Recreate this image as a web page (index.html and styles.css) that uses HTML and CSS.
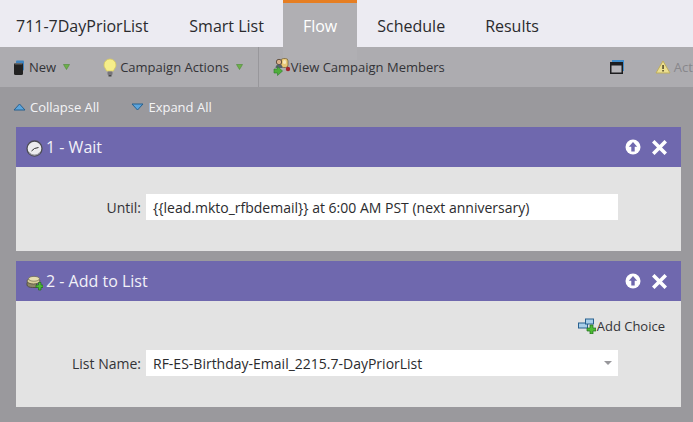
FILE: index.html
```html
<!DOCTYPE html>
<html lang="en">
<head>
    <meta charset="UTF-8">
    <title>711-7DayPriorList</title>
    <link rel="stylesheet" href="styles.css">
</head>
<body>

<!-- Tabs -->
<nav class="tabs">
    <a class="tab tab-first">711-7DayPriorList</a>
    <a class="tab tab-list">Smart List</a>
    <a class="tab tab-active">Flow</a>
    <a class="tab">Schedule</a>
    <a class="tab">Results</a>
</nav>

<!-- Toolbar -->
<div class="toolbar">
    <div class="tool tool-new">
        <svg class="icon" width="12" height="15" viewBox="0 0 12 15">
            <rect x="3" y="0.500" width="8" height="10" rx="1" fill="#3f84c0"/>
            <rect x="1" y="3" width="9" height="12" rx="1.500" fill="#222"/>
            <rect x="2" y="3" width="7" height="1.500" fill="#666"/>
        </svg>
        <span>New</span>
        <svg class="caret" width="7" height="6" viewBox="0 0 7 6"><path d="M0.500 0.500h6L3.500 5.500z" fill="#6db04a" stroke="#4c8a36" stroke-width="0.600"/></svg>
    </div>
    <div class="tool tool-actions">
        <svg class="icon" width="14" height="19" viewBox="0 0 14 19">
            <path d="M7 1a6 6 0 0 0-6 6c0 2.500 1.800 3.700 2.600 6h6.800c.8-2.300 2.600-3.500 2.600-6a6 6 0 0 0-6-6z" fill="#f6ee8a" stroke="#d9c95c" stroke-width="0.800"/>
            <rect x="4.500" y="13.500" width="5" height="3.500" rx="1" fill="#77757a"/>
            <rect x="5.500" y="17" width="3" height="1.500" fill="#444"/>
        </svg>
        <span>Campaign Actions</span>
        <svg class="caret" width="7" height="6" viewBox="0 0 7 6"><path d="M0.500 0.500h6L3.500 5.500z" fill="#6db04a" stroke="#4c8a36" stroke-width="0.600"/></svg>
    </div>
    <div class="tool tool-members">
        <svg class="icon" width="18" height="18" viewBox="0 0 18 18">
            <rect x="8" y="0.500" width="7" height="9" rx="2.500" fill="#e8c877" stroke="#6d5a33" stroke-width="0.700"/>
            <rect x="10" y="2" width="3" height="4" rx="1.500" fill="#f5e6bd"/>
            <circle cx="6" cy="4" r="2.700" fill="#d9b08a" stroke="#4a3a2a" stroke-width="0.800"/>
            <path d="M2.500 10c0-2.500 1.500-3.500 3.500-3.500s3.500 1 3.500 3.500z" fill="#56606e"/>
            <circle cx="15" cy="11" r="2.200" fill="#a3242c"/>
            <path d="M1 11h3.500V8.500l5 4.500-5 4.500V15H1z" fill="#4fae3c" stroke="#2e7c28" stroke-width="0.600"/>
        </svg>
        <span>View Campaign Members</span>
    </div>
    <svg class="window-icon" width="14" height="14" viewBox="0 0 14 14">
        <rect x="2" y="0" width="12" height="11" fill="#3f8ccb"/>
        <rect x="0.750" y="2.750" width="11.500" height="10.500" fill="#b7b6ba" stroke="#1d1d1f" stroke-width="1.500"/>
        <rect x="0" y="2" width="13" height="3.500" fill="#1d1d1f"/>
    </svg>
    <div class="tool tool-warn">
        <svg class="icon" width="16" height="14" viewBox="0 0 16 14">
            <path d="M8 1l7 12H1z" fill="#ecdf90" stroke="#bfae5c" stroke-width="1" stroke-linejoin="round"/>
            <rect x="7.300" y="5" width="1.500" height="4" fill="#4a4325"/>
            <rect x="7.300" y="10" width="1.500" height="1.500" fill="#4a4325"/>
        </svg>
        <span>Act</span>
    </div>
</div>

<div class="content">
    <div class="collapse-row">
        <a class="collapse-link collapse-first">
            <svg width="13" height="8" viewBox="0 0 13 8"><path d="M6.500 1L12 7H1z" fill="#5da5dc" stroke="#27608f" stroke-width="1"/></svg>
            Collapse All
        </a>
        <a class="collapse-link">
            <svg width="13" height="8" viewBox="0 0 13 8"><path d="M1 1h11L6.500 7z" fill="#5da5dc" stroke="#27608f" stroke-width="1"/></svg>
            Expand All
        </a>
    </div>

    <!-- Step 1 -->
    <section class="step">
        <header class="step-head">
            <svg class="step-icon step-icon-clock" width="17" height="17" viewBox="0 0 17 17">
                <circle cx="8.500" cy="8.500" r="7.500" fill="#ececee" stroke="#4c4c55" stroke-width="1.300"/>
                <path d="M3 12.500a7 7 0 0 0 11 0" fill="none" stroke="#9a9aa2" stroke-width="1.200"/>
                <path d="M8.500 8.500L12.500 7.500M8.500 8.500L5.500 11" stroke="#333" stroke-width="1" fill="none"/>
            </svg>
            <h2>1 - Wait</h2>
            <div class="step-btns">
                <svg width="16" height="16" viewBox="0 0 16 16"><circle cx="8" cy="8" r="7.500" fill="#fff"/><path d="M8 3l4.200 4.800H9.700V12.500H6.300V7.800H3.800z" fill="#6f68ae"/></svg>
                <svg width="15" height="15" viewBox="0 0 15 15"><path d="M2.500 2.500l10 10M12.500 2.500l-10 10" stroke="#fff" stroke-width="3.600" stroke-linecap="square"/></svg>
            </div>
        </header>
        <div class="step-body step-body-wait">
            <div class="field">
                <label>Until:</label>
                <div class="field-value">{{lead.mkto_rfbdemail}} at 6:00 AM PST (next anniversary)</div>
            </div>
        </div>
    </section>

    <!-- Step 2 -->
    <section class="step">
        <header class="step-head">
            <svg class="step-icon" width="17" height="17" viewBox="0 0 17 17">
                <path d="M1 8.500v2.500c0 1.500 2.500 2.500 5.500 2.500h4V8.500z" fill="#8d8768" stroke="#4a4735" stroke-width="0.800"/>
                <ellipse cx="7.500" cy="7" rx="6.500" ry="3" fill="#d8cf9c" stroke="#55523f" stroke-width="0.800"/>
                <ellipse cx="8" cy="4.800" rx="5.500" ry="2.400" fill="#e6deb0" stroke="#6f6b50" stroke-width="0.700"/>
                <path d="M10 11h2.500V8.500H15V11h2v2.500h-2V16h-2.500v-2.500H10z" fill="#4dbb35" stroke="#1f6d1d" stroke-width="0.700"/>
            </svg>
            <h2>2 - Add to List</h2>
            <div class="step-btns">
                <svg width="16" height="16" viewBox="0 0 16 16"><circle cx="8" cy="8" r="7.500" fill="#fff"/><path d="M8 3l4.200 4.800H9.700V12.500H6.300V7.800H3.800z" fill="#6f68ae"/></svg>
                <svg width="15" height="15" viewBox="0 0 15 15"><path d="M2.500 2.500l10 10M12.500 2.500l-10 10" stroke="#fff" stroke-width="3.600" stroke-linecap="square"/></svg>
            </div>
        </header>
        <div class="step-body step-body-list">
            <a class="add-choice">
                <svg width="18" height="16" viewBox="0 0 18 16">
                    <rect x="0.500" y="5" width="9" height="5" fill="#a9cfe9" stroke="#27608f"/>
                    <rect x="7.500" y="1" width="8" height="5" fill="#a9cfe9" stroke="#27608f"/>
                    <path d="M9 10h3V7h3v3h3v3h-3v3h-3v-3H9z" fill="#4dbb35" stroke="#1f6d1d" stroke-width="0.700"/>
                </svg>
                <span>Add Choice</span>
            </a>
            <div class="field">
                <label>List Name:</label>
                <div class="field-value field-select">
                    RF-ES-Birthday-Email_2215.7-DayPriorList
                    <span class="select-arrow"></span>
                </div>
            </div>
        </div>
    </section>
</div>

</body>
</html>
```

FILE: styles.css
```css
html, body {
    height: 100%;
}
body {
    margin: 0;
    overflow: hidden;
    background-color: #9a999d;
    font-family: "Open Sans", Arial, sans-serif;
    color: #2b2b2e;
}
.tabs {
    display: flex;
    height: 47px;
    background-color: #ecebf2;
}
.tab {
    padding: 16px 20px 0;
    font-size: 16px;
    line-height: 20px;
    color: #2a2a2d;
}
.tab-first {
    padding-left: 16px;
    padding-right: 21px;
}
.tab-list {
    padding-left: 20px;
    padding-right: 19px;
}
.tab-active {
    height: 44px;
    padding: 13px 20px 0;
    border-top: 3px solid #e67e22;
    background-color: #b0afb3;
    color: #fff;
}
.toolbar {
    display: flex;
    align-items: center;
    height: 40px;
    background-color: #adacb0;
    font-size: 13px;
    color: #333337;
}
.tool {
    display: flex;
    align-items: center;
    white-space: nowrap;
}
.tool .icon {
    flex: none;
}
.tool-new {
    margin-left: 13px;
}
.tool-new span {
    margin-left: 4px;
}
.caret {
    margin-left: 7px;
}
.tool-actions {
    margin-left: 33px;
}
.tool-actions span {
    margin-left: 3px;
}
.tool-members {
    height: 40px;
    margin-left: 15px;
    padding-left: 14px;
    border-left: 1px solid #98979b;
}
.window-icon {
    flex: none;
    margin-left: 165px;
}
.tool-warn {
    margin-left: 31px;
    color: #88878b;
}
.tool-warn span {
    margin-left: 3px;
}
.collapse-row {
    display: flex;
    height: 40px;
    align-items: center;
    font-size: 13px;
    color: #f4f4f6;
}
.collapse-link {
    display: flex;
    align-items: center;
    gap: 4px;
}
.collapse-first {
    margin-left: -3px;
    margin-right: 32px;
}
.content {
    padding: 0 12px 0 16px;
}
.step {
    margin-bottom: 10px;
}
.step-head {
    display: flex;
    align-items: center;
    height: 40px;
    padding: 0 14px 0 10px;
    background-color: #6f68ae;
    color: #fff;
}
.step-head h2 {
    margin: 0 0 0 3px;
    font-size: 16px;
    font-weight: 400;
    color: #f2f1f8;
}
.step-icon {
    flex: none;
    margin-top: 2px;
}
.step-icon-clock {
    margin-top: 3px;
}
.step-btns {
    display: flex;
    align-items: center;
    gap: 11px;
    margin-left: auto;
}
.step-body {
    background-color: #e3e3e3;
    box-sizing: border-box;
}
.step-body-wait {
    height: 84px;
    padding-top: 27px;
}
.step-body-list {
    height: 106px;
    padding-top: 17px;
}
.field {
    display: flex;
    align-items: center;
    justify-content: flex-end;
    width: 602px;
    font-size: 14px;
}
.field label {
    margin-right: 5px;
    color: #333337;
}
.field-value {
    box-sizing: border-box;
    position: relative;
    width: 472px;
    height: 26px;
    padding-left: 7px;
    background-color: #fff;
    line-height: 27px;
    color: #2b2b2e;
}
.select-arrow {
    position: absolute;
    right: 6px;
    top: 11px;
    border-left: 4px solid transparent;
    border-right: 4px solid transparent;
    border-top: 4px solid #98979b;
}
.add-choice {
    display: flex;
    align-items: center;
    justify-content: flex-end;
    gap: 1px;
    height: 16px;
    padding-right: 16px;
    margin-bottom: 16px;
    font-size: 13px;
    color: #333337;
}
```
